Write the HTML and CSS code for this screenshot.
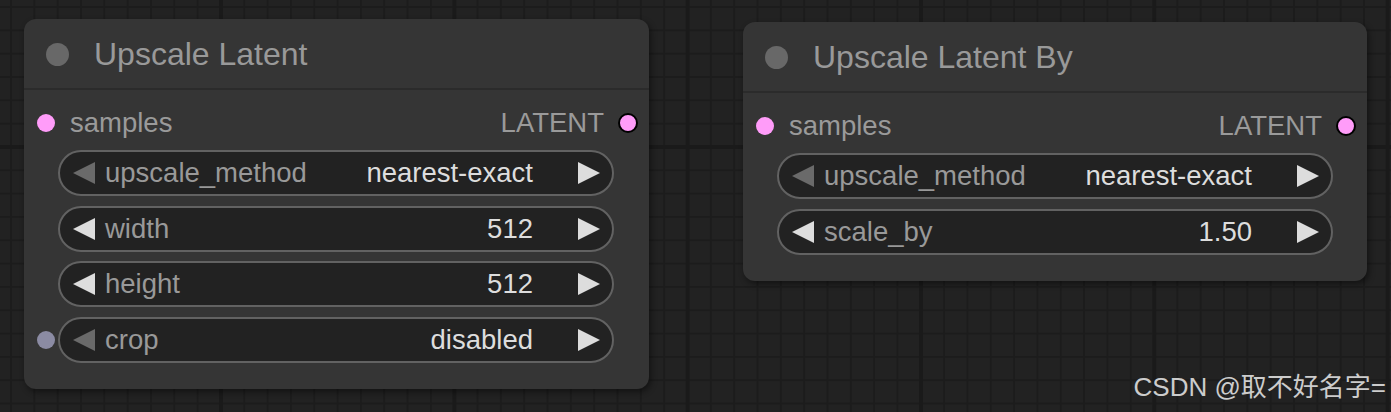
FILE: index.html
```html
<!DOCTYPE html>
<html>
<head>
<meta charset="utf-8">
<link rel="stylesheet" href="styles.css">
</head>
<body>
<div class="canvas">
  <div class="node node-a">
    <div class="node-title"><span class="title-dot"></span><span class="title-text">Upscale Latent</span></div>
    <div class="node-body">
      <div class="slot-row">
        <span class="slot-in"></span><span class="slot-label">samples</span>
        <span class="out-label">LATENT</span><span class="slot-out"></span>
      </div>
      <div class="widget-row">
        <span class="widget-slot"></span>
        <div class="widget">
          <svg class="arrow dim" viewBox="0 0 23 23"><polygon points="23,0 23,23 0,11.5"/></svg>
          <span class="w-label">upscale_method</span>
          <span class="w-value">nearest-exact</span>
          <svg class="arrow" viewBox="0 0 23 23"><polygon points="0,0 0,23 23,11.5"/></svg>
        </div>
      </div>
      <div class="widget-row">
        <span class="widget-slot"></span>
        <div class="widget">
          <svg class="arrow" viewBox="0 0 23 23"><polygon points="23,0 23,23 0,11.5"/></svg>
          <span class="w-label">width</span>
          <span class="w-value">512</span>
          <svg class="arrow" viewBox="0 0 23 23"><polygon points="0,0 0,23 23,11.5"/></svg>
        </div>
      </div>
      <div class="widget-row">
        <span class="widget-slot"></span>
        <div class="widget">
          <svg class="arrow" viewBox="0 0 23 23"><polygon points="23,0 23,23 0,11.5"/></svg>
          <span class="w-label">height</span>
          <span class="w-value">512</span>
          <svg class="arrow" viewBox="0 0 23 23"><polygon points="0,0 0,23 23,11.5"/></svg>
        </div>
      </div>
      <div class="widget-row">
        <span class="widget-slot"><span class="slot-dot"></span></span>
        <div class="widget">
          <svg class="arrow dim" viewBox="0 0 23 23"><polygon points="23,0 23,23 0,11.5"/></svg>
          <span class="w-label">crop</span>
          <span class="w-value">disabled</span>
          <svg class="arrow" viewBox="0 0 23 23"><polygon points="0,0 0,23 23,11.5"/></svg>
        </div>
      </div>
    </div>
  </div>

  <div class="node node-b">
    <div class="node-title"><span class="title-dot"></span><span class="title-text">Upscale Latent By</span></div>
    <div class="node-body">
      <div class="slot-row">
        <span class="slot-in"></span><span class="slot-label">samples</span>
        <span class="out-label">LATENT</span><span class="slot-out"></span>
      </div>
      <div class="widget-row">
        <span class="widget-slot"></span>
        <div class="widget">
          <svg class="arrow dim" viewBox="0 0 23 23"><polygon points="23,0 23,23 0,11.5"/></svg>
          <span class="w-label">upscale_method</span>
          <span class="w-value">nearest-exact</span>
          <svg class="arrow" viewBox="0 0 23 23"><polygon points="0,0 0,23 23,11.5"/></svg>
        </div>
      </div>
      <div class="widget-row">
        <span class="widget-slot"></span>
        <div class="widget">
          <svg class="arrow" viewBox="0 0 23 23"><polygon points="23,0 23,23 0,11.5"/></svg>
          <span class="w-label">scale_by</span>
          <span class="w-value">1.50</span>
          <svg class="arrow" viewBox="0 0 23 23"><polygon points="0,0 0,23 23,11.5"/></svg>
        </div>
      </div>
    </div>
  </div>

  <div class="watermark">CSDN @取不好名字=</div>
</div>
</body>
</html>
```

FILE: styles.css
```css
html, body {
  margin: 0;
  padding: 0;
}
body {
  width: 1391px;
  height: 412px;
  overflow: hidden;
  background-color: #222222;
  font-family: "Liberation Sans", Arial, sans-serif;
}
.canvas {
  position: relative;
  width: 1391px;
  height: 412px;
  overflow: hidden;
  background-color: #222222;
  background-image:
    linear-gradient(to right, #1a1a1a 4px, transparent 4px),
    linear-gradient(to bottom, #1a1a1a, #1a1a1a),
    linear-gradient(to right, #1c1c1c 2px, transparent 2px),
    linear-gradient(to bottom, #1c1c1c 2px, transparent 2px);
  background-size:
    233.333px 100%,
    100% 4px,
    23.3333px 100%,
    100% 23.3333px;
  background-position:
    219px 0,
    0 145px,
    10px 0,
    0 6px;
  background-repeat: repeat, no-repeat, repeat, repeat;
}

.node {
  position: absolute;
  background: #353535;
  border-radius: 12px;
  box-shadow: 2px 3px 6px rgba(0, 0, 0, 0.45);
  display: flex;
  flex-direction: column;
}
.node-a {
  left: 24px;
  top: 19px;
  width: 625px;
}
.node-b {
  left: 743px;
  top: 22px;
  width: 624px;
}

.node-title {
  height: 71px;
  display: flex;
  align-items: center;
  padding-left: 22px;
  padding-top: 2px;
  box-sizing: border-box;
  border-bottom: 2px solid #2b2b2b;
}
.title-dot {
  width: 23px;
  height: 23px;
  border-radius: 50%;
  background: #686868;
  flex: none;
}
.title-text {
  margin-left: 25px;
  font-size: 32px;
  color: #999999;
  white-space: nowrap;
}

.node-body {
  display: flex;
  flex-direction: column;
  padding: 10px 0 26.5px 0;
}

.slot-row {
  height: 46px;
  display: flex;
  align-items: center;
  font-size: 27.5px;
  color: #9a9a9a;
  margin-bottom: 4px;
}
.slot-in {
  width: 18px;
  height: 18px;
  border-radius: 50%;
  background: #ff9cf9;
  margin-left: 13px;
  flex: none;
}
.slot-label {
  margin-left: 15px;
}
.out-label {
  margin-left: auto;
}
.slot-out {
  width: 16px;
  height: 16px;
  border-radius: 50%;
  background: #ff9cf9;
  border: 2px solid #000;
  margin-left: 14px;
  margin-right: 11px;
  flex: none;
}

.widget-row {
  display: flex;
  align-items: center;
  height: 46px;
  margin-bottom: 9.5px;
}
.widget-row:last-child {
  margin-bottom: 0;
}
.widget-slot {
  width: 34px;
  flex: none;
  display: flex;
  align-items: center;
}
.slot-dot {
  width: 18px;
  height: 18px;
  border-radius: 50%;
  background: #8b8ba3;
  margin-left: 13px;
}
.widget {
  box-sizing: border-box;
  width: 556px;
  height: 46px;
  border: 2px solid #626262;
  border-radius: 23px;
  background: #222222;
  display: flex;
  align-items: center;
  padding: 0 12px 0 13px;
  font-size: 27.5px;
  white-space: nowrap;
}
.arrow {
  width: 22px;
  height: 22px;
  flex: none;
  fill: #dddddd;
}
.arrow.dim {
  fill: #6a6a6a;
}
.w-label {
  margin-left: 10px;
  color: #999999;
}
.w-value {
  margin-left: auto;
  margin-right: 45px;
  color: #dddddd;
}

.watermark {
  position: absolute;
  right: 5px;
  top: 373px;
  font-family: "Liberation Sans", "Noto Sans CJK SC", sans-serif;
  font-size: 26px;
  line-height: 29px;
  color: #cccccc;
  white-space: nowrap;
}
```
